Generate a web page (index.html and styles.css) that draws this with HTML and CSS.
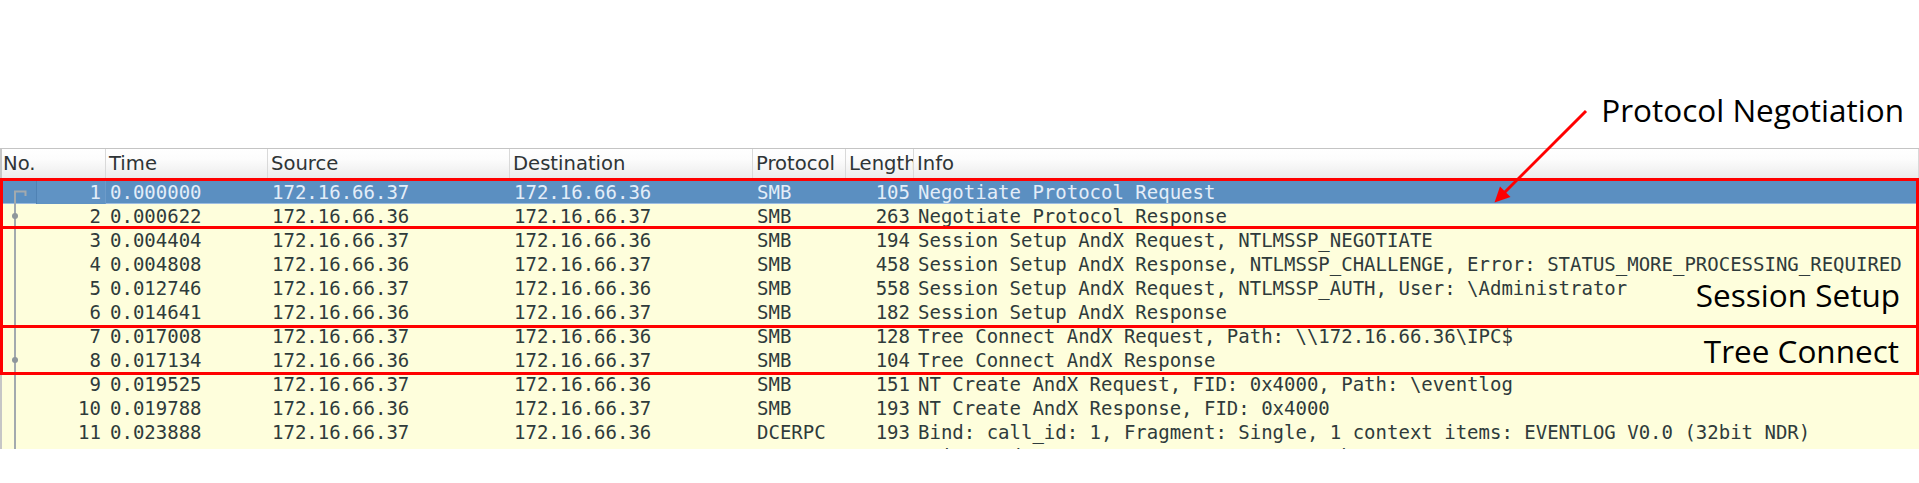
FILE: index.html
```html
<!DOCTYPE html>
<html>
<head>
<meta charset="utf-8">
<title>Packet list</title>
<link rel="stylesheet" href="styles.css">
</head>
<body>
<div class="page">
  <div class="spacer"></div>
  <div class="plist">
    <div class="row head">
      <div class="c no">No.</div>
      <div class="c">Time</div>
      <div class="c">Source</div>
      <div class="c">Destination</div>
      <div class="c">Protocol</div>
      <div class="c">Length</div>
      <div class="c">Info</div>
    </div>
    <div class="rows">
      <div class="row sel"><div class="c no focus">1</div><div class="c">0.000000</div><div class="c">172.16.66.37</div><div class="c">172.16.66.36</div><div class="c">SMB</div><div class="c len">105</div><div class="c">Negotiate Protocol Request</div></div>
      <div class="row"><div class="c no">2</div><div class="c">0.000622</div><div class="c">172.16.66.36</div><div class="c">172.16.66.37</div><div class="c">SMB</div><div class="c len">263</div><div class="c">Negotiate Protocol Response</div></div>
      <div class="row"><div class="c no">3</div><div class="c">0.004404</div><div class="c">172.16.66.37</div><div class="c">172.16.66.36</div><div class="c">SMB</div><div class="c len">194</div><div class="c">Session Setup AndX Request, NTLMSSP_NEGOTIATE</div></div>
      <div class="row"><div class="c no">4</div><div class="c">0.004808</div><div class="c">172.16.66.36</div><div class="c">172.16.66.37</div><div class="c">SMB</div><div class="c len">458</div><div class="c">Session Setup AndX Response, NTLMSSP_CHALLENGE, Error: STATUS_MORE_PROCESSING_REQUIRED</div></div>
      <div class="row"><div class="c no">5</div><div class="c">0.012746</div><div class="c">172.16.66.37</div><div class="c">172.16.66.36</div><div class="c">SMB</div><div class="c len">558</div><div class="c">Session Setup AndX Request, NTLMSSP_AUTH, User: \Administrator</div></div>
      <div class="row"><div class="c no">6</div><div class="c">0.014641</div><div class="c">172.16.66.36</div><div class="c">172.16.66.37</div><div class="c">SMB</div><div class="c len">182</div><div class="c">Session Setup AndX Response</div></div>
      <div class="row"><div class="c no">7</div><div class="c">0.017008</div><div class="c">172.16.66.37</div><div class="c">172.16.66.36</div><div class="c">SMB</div><div class="c len">128</div><div class="c">Tree Connect AndX Request, Path: \\172.16.66.36\IPC$</div></div>
      <div class="row"><div class="c no">8</div><div class="c">0.017134</div><div class="c">172.16.66.36</div><div class="c">172.16.66.37</div><div class="c">SMB</div><div class="c len">104</div><div class="c">Tree Connect AndX Response</div></div>
      <div class="row"><div class="c no">9</div><div class="c">0.019525</div><div class="c">172.16.66.37</div><div class="c">172.16.66.36</div><div class="c">SMB</div><div class="c len">151</div><div class="c">NT Create AndX Request, FID: 0x4000, Path: \eventlog</div></div>
      <div class="row"><div class="c no">10</div><div class="c">0.019788</div><div class="c">172.16.66.36</div><div class="c">172.16.66.37</div><div class="c">SMB</div><div class="c len">193</div><div class="c">NT Create AndX Response, FID: 0x4000</div></div>
      <div class="row"><div class="c no">11</div><div class="c">0.023888</div><div class="c">172.16.66.37</div><div class="c">172.16.66.36</div><div class="c">DCERPC</div><div class="c len">193</div><div class="c">Bind: call_id: 1, Fragment: Single, 1 context items: EVENTLOG V0.0 (32bit NDR)</div></div>
      <div class="row"><div class="c no">12</div><div class="c">0.028073</div><div class="c">172.16.66.36</div><div class="c">172.16.66.37</div><div class="c">SMB</div><div class="c len">105</div><div class="c">Write AndX Response, FID: 0x4000, 72 bytes</div></div>
    </div>
    <svg class="tree" width="40" height="301" viewBox="0 0 40 301">
      <path d="M15 301 V43.5 H25.5 V48" fill="none" stroke="#a3aaae" stroke-width="2"/>
      <circle cx="15" cy="68" r="3" fill="#8f979c"/>
      <circle cx="15" cy="212" r="3" fill="#8f979c"/>
    </svg>
  </div>

  <div class="box b1"></div>
  <div class="box b2"></div>
  <div class="box b3"></div>

  <div class="label l-proto">Protocol Negotiation</div>
  <div class="label l-sess">Session Setup</div>
  <div class="label l-tree">Tree Connect</div>

  <svg class="arrow" width="120" height="120" viewBox="1480 100 120 120">
    <line x1="1586" y1="111" x2="1503" y2="194" stroke="#ff0000" stroke-width="3"/>
    <polygon points="1494.5,202.5 1500,186.5 1510.5,197" fill="#ff0000"/>
  </svg>
</div>
</body>
</html>
```

FILE: styles.css
```css
html, body {
  margin: 0;
  padding: 0;
  background: #ffffff;
}

.page {
  position: relative;
  width: 1919px;
  height: 483px;
  overflow: hidden;
  background: #ffffff;
}

.spacer {
  height: 148px;
}

.plist {
  position: relative;
  height: 300px;
  border-top: 1px solid #c4c4c4;
  border-left: 2px solid #c6c6c6;
  overflow: hidden;
  background: #ffffff;
}

.row {
  display: grid;
  grid-template-columns: 104px 162px 242px 243px 93px 68px 1fr;
  height: 24px;
  line-height: 24px;
  background: #fefedc;
  color: #2f3b3b;
  font-family: "DejaVu Sans Mono", "Liberation Mono", monospace;
  font-size: 19px;
}

.c {
  padding: 0 4px;
  white-space: nowrap;
  overflow: hidden;
}

.c.no {
  text-align: right;
  padding-right: 5px;
}

.c.len {
  text-align: right;
}

.head {
  height: 31px;
  line-height: 30px;
  box-sizing: border-box;
  border-bottom: 1px solid #d6d6d6;
  background: linear-gradient(#ffffff 0%, #fcfcfc 35%, #ebebeb 100%);
  color: #2e3436;
  font-family: "DejaVu Sans", "Liberation Sans", sans-serif;
  font-size: 19.6px;
}

.head .c {
  padding: 0 3px;
  border-right: 1px solid #d9d9d9;
  text-overflow: clip;
}

.head .c.no {
  text-align: left;
  padding-left: 1px;
}

.sel {
  background: #5b8fc1;
  color: #e3edf8;
  box-shadow: inset 0 -1px 0 #9dbde0;
}

.sel .focus {
  margin-left: 34px;
  box-shadow: inset 1px 0 0 #4f82b4, inset -1px 0 0 #6d9bc9;
  background: #6093c4;
}

.tree {
  position: absolute;
  left: -2px;
  top: -1px;
}

.box {
  position: absolute;
  left: 0;
  width: 1919px;
  box-sizing: border-box;
  border: 3px solid #ff0000;
}

.b1 { top: 178px; height: 51px; }
.b2 { top: 226px; height: 102px; }
.b3 { top: 325px; height: 50px; }

.label {
  position: absolute;
  font-family: "Open Sans", "Noto Sans", sans-serif;
  font-size: 31.5px;
  line-height: 32px;
  color: #000000;
  white-space: nowrap;
}

.l-proto { right: 15px; top: 94px; }
.l-sess { right: 19px; top: 279px; }
.l-tree { right: 20px; top: 335px; }

.arrow {
  position: absolute;
  left: 1480px;
  top: 100px;
}
```
